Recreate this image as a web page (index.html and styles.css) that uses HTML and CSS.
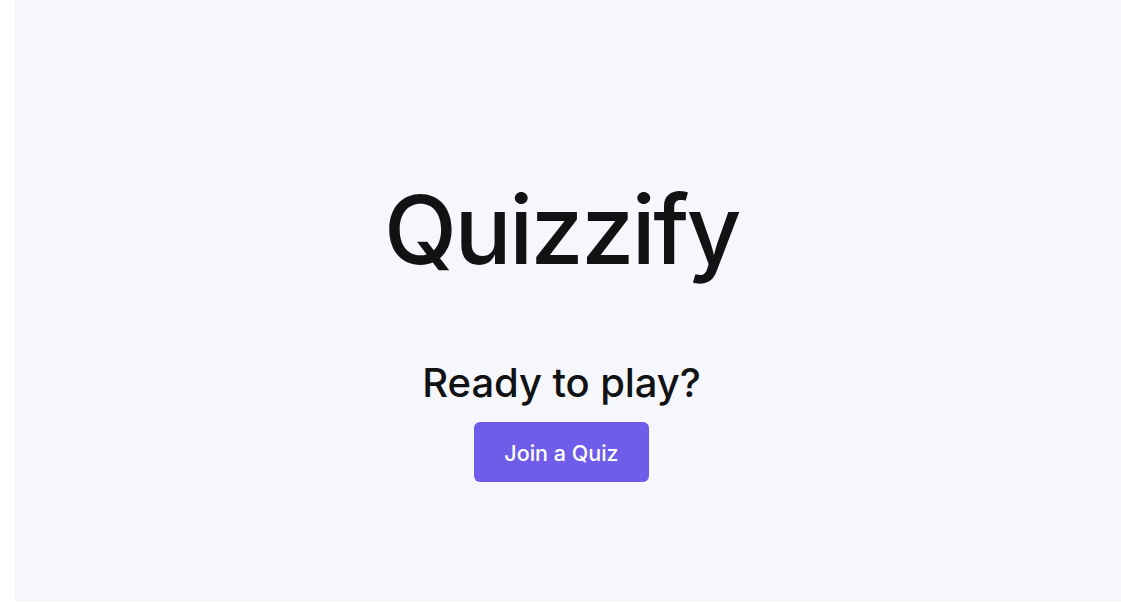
FILE: index.html
```html
<!DOCTYPE html>
<html>
<head>
<meta charset="utf-8">
<link rel="stylesheet" href="styles.css">
</head>
<body>
<main class="page">
  <h1 class="title">Quizzify</h1>
  <section class="cta">
    <h2 class="cta-text">Ready to play?</h2>
    <button class="btn">Join a Quiz</button>
  </section>
</main>
</body>
</html>
```
FILE: styles.css
```css
html, body { margin: 0; padding: 0; background: #ffffff; }
body { font-family: Inter, "Noto Sans", sans-serif; color: #111214; }
.page {
  margin-left: 15px;
  padding-right: 13px;
  height: 601px;
  background: #f6f7fb;
  display: flex;
  flex-direction: column;
  align-items: center;
  box-sizing: border-box;
  padding-top: 172px;
}
.title {
  margin: 0;
  font-size: 95px;
  font-weight: 500;
  line-height: 116px;
  letter-spacing: -2.5px;
}
.cta { display: flex; flex-direction: column; align-items: center; margin-top: 70px; }
.cta-text { margin: 0; font-size: 40px; font-weight: 500; line-height: 50px; letter-spacing: -0.1px; }
.btn {
  margin-top: 14px;
  width: 175px;
  height: 60px;
  border: 0;
  border-radius: 6px;
  background: #6f5ce9;
  color: #fff;
  font-family: inherit;
  font-size: 21.5px;
  font-weight: 500;
  padding: 2px 0 0;
}
```
